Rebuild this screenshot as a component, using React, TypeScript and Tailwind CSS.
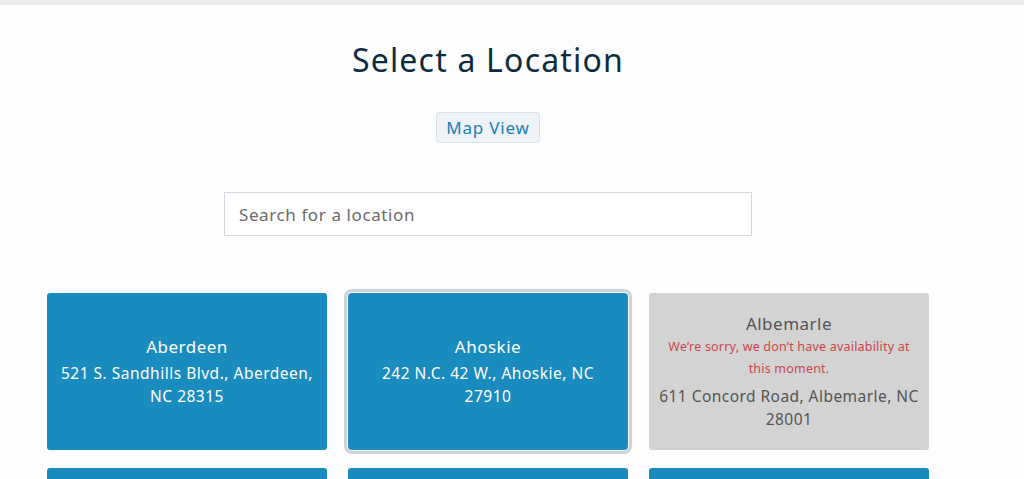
import React from "react";

type Loc = { name: string; address: string; unavailable?: boolean; selected?: boolean };

const locations: Loc[] = [
  { name: "Aberdeen", address: "521 S. Sandhills Blvd., Aberdeen, NC 28315" },
  { name: "Ahoskie", address: "242 N.C. 42 W., Ahoskie, NC 27910", selected: true },
  { name: "Albemarle", address: "611 Concord Road, Albemarle, NC 28001", unavailable: true },
  { name: "Apex", address: "1000 Example Rd., Apex, NC 27502" },
  { name: "Asheboro", address: "100 Example St., Asheboro, NC 27203" },
  { name: "Asheville", address: "200 Example Ave., Asheville, NC 28801" },
];

function Card({ loc }: { loc: Loc }) {
  if (loc.unavailable) {
    return (
      <div className="h-[157px] rounded-[3px] bg-[#d3d3d3] flex flex-col items-center justify-center text-center px-[9px] text-[#555555]">
        <div className="text-[17px] leading-[24px] tracking-[0.5px]">{loc.name}</div>
        <div className="text-[12.5px] leading-[22px] tracking-[0.2px] text-[#c9474b] px-[6px]">
          We’re sorry, we don’t have availability at this moment.
        </div>
        <div className="text-[15.5px] leading-[23px] tracking-[0.45px] mt-[5px]">{loc.address}</div>
      </div>
    );
  }
  return (
    <div
      className={
        "h-[157px] rounded-[3px] bg-[#1a8bbe] flex flex-col items-center justify-center text-center px-[12px] text-white " +
        (loc.selected ? "outline outline-[3px] outline-[#cdd3d9] outline-offset-[1px] rounded-[4px]" : "")
      }
    >
      <div className="text-[17px] leading-[24px] tracking-[0.5px] mb-[3px]">{loc.name}</div>
      <div className="text-[15.5px] leading-[23px] tracking-[0.5px]">{loc.address}</div>
    </div>
  );
}

export default function App() {
  return (
    <div className="h-[479px] overflow-hidden bg-[#fdfdfd]" style={{ fontFamily: '"Noto Sans", sans-serif' }}>
      <div className="h-[5px] bg-[#ececec]" />
      <div className="w-[976px] flex flex-col items-center">
        <h1 className="mt-[35px] text-[32px] leading-[40px] tracking-[1.2px] text-[#0e2c3f]">Select a Location</h1>
        <button className="mt-[32px] h-[31px] px-[9px] rounded-[3px] border border-[#dbe3ea] bg-[#eef3f7] text-[17px] tracking-[0.8px] text-[#1a7fb6]">
          Map View
        </button>
        <input
          className="mt-[49px] w-[528px] h-[44px] border border-[#d3d9e0] bg-white px-[14px] text-[17px] tracking-[0.6px] text-[#333] placeholder:text-[#6b6b6b] outline-none"
          placeholder="Search for a location"
        />
      </div>
      <div className="mt-[57px] pl-[47px] grid grid-cols-[repeat(3,280px)] gap-x-[21px] gap-y-[18px]">
        {locations.map((l) => (
          <Card key={l.name} loc={l} />
        ))}
      </div>
    </div>
  );
}
